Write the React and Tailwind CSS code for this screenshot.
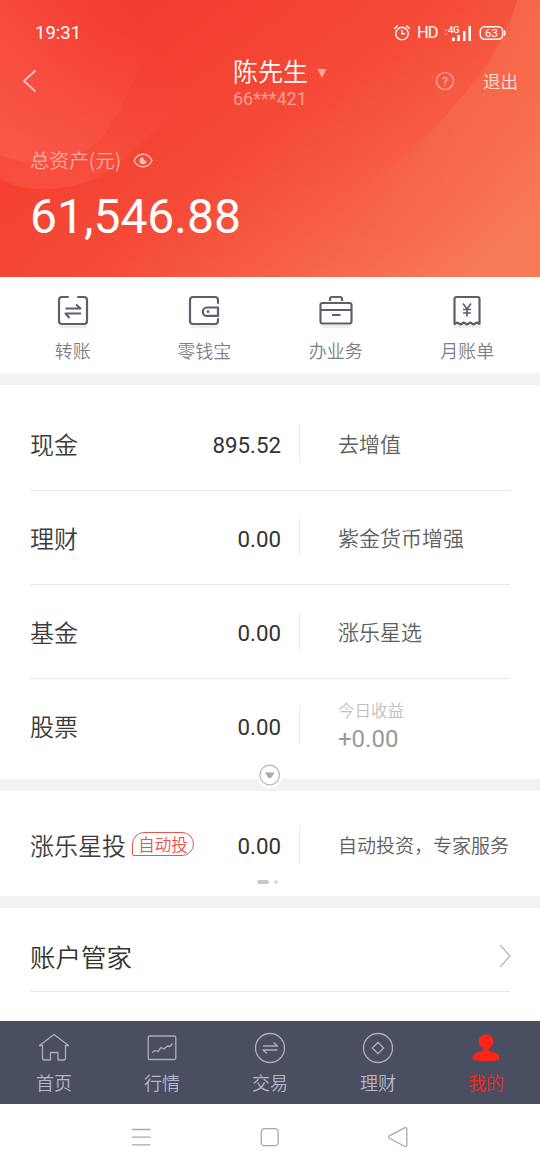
import React from "react";

const CJK = "font-['Noto_Sans_CJK_SC',sans-serif] font-[350]";
const NUM = "font-['Roboto',sans-serif] font-normal";

function HeaderArt() {
  return (
    <svg className="absolute inset-0" width="540" height="277" viewBox="0 0 540 277" fill="none">
      <defs>
        <linearGradient id="base" x1="150" y1="0" x2="400" y2="330" gradientUnits="userSpaceOnUse">
          <stop offset="0" stopColor="#f43b2f" />
          <stop offset="0.45" stopColor="#f54b38" />
          <stop offset="1" stopColor="#f87a56" />
        </linearGradient>
        <linearGradient id="waveA" x1="165" y1="40" x2="30" y2="150" gradientUnits="userSpaceOnUse">
          <stop offset="0" stopColor="#ff7060" stopOpacity="0" />
          <stop offset="1" stopColor="#ff7565" stopOpacity="0.28" />
        </linearGradient>
        <linearGradient id="waveB" x1="170" y1="70" x2="60" y2="190" gradientUnits="userSpaceOnUse">
          <stop offset="0" stopColor="#ff6a58" stopOpacity="0" />
          <stop offset="1" stopColor="#ff7060" stopOpacity="0.28" />
        </linearGradient>
        <linearGradient id="disc" x1="530" y1="20" x2="370" y2="220" gradientUnits="userSpaceOnUse">
          <stop offset="0" stopColor="#fa8058" stopOpacity="0.4" />
          <stop offset="0.5" stopColor="#fa8058" stopOpacity="0.2" />
          <stop offset="1" stopColor="#fa7a54" stopOpacity="0" />
        </linearGradient>
      </defs>
      <rect width="540" height="277" fill="url(#base)" />
      <path d="M517 0C510 28 488 69 459 100C420 147 370 190 300 215L200 277H540V0Z" fill="url(#disc)" />
      <path d="M0 0H280V90C230 96 200 105 172 119C155 128 138 146 117 165C98 181 70 189 41 189C25 189 12 185 0 179Z" fill="url(#waveB)" />
      <path d="M0 0H230V36C190 40 165 46 152 55C131 76 128 98 114 120C98 149 75 162 34 162C22 162 10 159 0 155Z" fill="url(#waveA)" />
    </svg>
  );
}

function StatusBar() {
  return (
    <div className="flex h-[50px] items-center justify-between pt-4 pr-[34px] pl-[35px] text-white">
      <span className={`${NUM} text-[18.5px] leading-none`}>19:31</span>
      <div className="flex items-center">
        <svg width="18" height="18" viewBox="0 0 18 18" fill="none" stroke="#fff" strokeWidth="1.4" strokeLinecap="round">
          <circle cx="9" cy="9.6" r="6.3" />
          <path d="M9 6.2v3.6h2.6M1.6 4.4L4.400 2M16.400 4.400L13.600 2" />
        </svg>
        <span className={`${NUM} ml-[6px] w-[21px] text-[16.5px] leading-none tracking-[-1px]`}>HD</span>
        <svg className="ml-[6px]" width="28" height="18" viewBox="0 0 28 18">
          <path d="M0 7l2-2.500L4 7zM0 9l2 2.500L4 9z" fill="#fff" opacity="0.3" />
          <text x="4" y="9" fontSize="9.500" fontWeight="500" fontFamily="Roboto, sans-serif" letterSpacing="-0.5" fill="#fff">4G</text>
          <path d="M8 13.500h2.700v3.500H8zM13.300 11h2.700v6h-2.700zM19 7h2.500v10h-2.500zM24.500 2h2.500v15h-2.500z" fill="#fff" />
        </svg>
        <svg className="ml-[7px]" width="27" height="16" viewBox="0 0 27 16" fill="none">
          <rect x="1.200" y="1.800" width="22.500" height="12.400" rx="4.500" stroke="#fff" strokeWidth="1.500" />
          <path d="M25 5.500c1.300 1 1.300 4 0 5" stroke="#fff" strokeWidth="1.400" />
          <text x="12.500" y="12" textAnchor="middle" fontSize="11.500" fontFamily="Roboto, sans-serif" fill="#fff">63</text>
        </svg>
      </div>
    </div>
  );
}

function Header() {
  return (
    <header className="relative h-[277px] shrink-0 overflow-hidden">
      <HeaderArt />
      <div className="relative">
        <StatusBar />
        <div className="grid h-[62px] grid-cols-[233px_1fr_auto] items-center pr-[22px] text-white">
          <svg className="ml-[22px]" width="16" height="24" viewBox="0 0 16 24" fill="none" stroke="#ffc9c1" strokeWidth="1.800">
            <path d="M13.500 1.500L2 12l11.500 10.500" />
          </svg>
          <div className="flex flex-col">
            <div className="flex items-center">
              <span className={`${CJK} text-[25px] leading-[36px]`}>陈先生</span>
              <svg className="mt-[7px] ml-[9px]" width="10" height="11" viewBox="0 0 10 11">
                <path d="M0.500 1H9.500L5 10z" fill="#fca79c" />
              </svg>
            </div>
            <span className={`${NUM} text-[18px] leading-[22px] text-[#fb9d91]`}>66***421</span>
          </div>
          <div className="flex items-center">
            <svg width="20" height="20" viewBox="0 0 20 20" fill="none">
              <circle cx="10" cy="10" r="8.500" stroke="#fcb1a5" strokeWidth="1.200" />
              <text x="10" y="14.500" textAnchor="middle" fontSize="12.500" fontFamily="Roboto, sans-serif" fill="#fcb1a5">?</text>
            </svg>
            <span className={`${CJK} ml-[28px] text-[17.5px] leading-6 text-[#ffe3dc]`}>退出</span>
          </div>
        </div>
        <div className="mt-[34px] flex h-[28px] items-center pl-[30px]">
          <span className={`${CJK} text-[19.6px] leading-7 text-[#fdaea3]`}>总资产(元)</span>
          <svg className="ml-[12px]" width="20" height="15" viewBox="0 0 20 15" fill="none">
            <path d="M1 7.500C3 3.500 6.500 1.200 10 1.200S17 3.500 19 7.500C17 11.500 13.500 13.800 10 13.800S3 11.500 1 7.500Z" stroke="#fec2b8" strokeWidth="1.400" />
            <path d="M10 4.200A3.500 3.500 0 1 0 13.500 7.700C11.500 8 10 6.500 10 4.200Z" fill="#fec2b8" />
          </svg>
        </div>
        <div className={`${NUM} mt-[14px] pl-[30px] text-[48px] leading-[58px] text-white`}>61,546.88</div>
      </div>
    </header>
  );
}

const actionStroke = { fill: "none", stroke: "#5c606e", strokeWidth: 2.2, strokeLinejoin: "round", strokeLinecap: "round" };

function ActionIcon({ children }) {
  return (
    <svg width="36" height="36" viewBox="0 0 36 36" {...actionStroke}>
      <path d="M6 33.500H31" stroke="#fbe4e4" strokeWidth="2.500" />
      {children}
    </svg>
  );
}

const actions = [
  {
    label: "转账",
    icon: (
      <>
        <path d="M13 4H7a3 3 0 0 0-3 3v21a3 3 0 0 0 3 3h22a3 3 0 0 0 3-3V7a3 3 0 0 0-3-3h-6" />
        <path d="M10.500 15.500H25.500L21 11.500M26 20.500H10.500L14.500 25" strokeWidth="2" strokeLinecap="butt" />
      </>
    ),
  },
  {
    label: "零钱宝",
    icon: (
      <>
        <path d="M32 10V7a3 3 0 0 0-3-3H7a3 3 0 0 0-3 3v21a3 3 0 0 0 3 3h22a3 3 0 0 0 3-3v-2" />
        <path d="M32 14.500H21a4.200 4.200 0 0 0 0 8.400H32Z" />
        <circle cx="22" cy="18.700" r="1.400" fill="#5c606e" stroke="none" />
      </>
    ),
  },
  {
    label: "办业务",
    icon: (
      <>
        <rect x="2.500" y="10" width="31" height="20.500" rx="2" />
        <path d="M12 8V6a2 2 0 0 1 2-2h8a2 2 0 0 1 2 2V8M2.500 17H33.500M14 22H22.500" strokeLinecap="butt" />
      </>
    ),
  },
  {
    label: "月账单",
    icon: (
      <>
        <path d="M5.500 31V6a2 2 0 0 1 2-2h21a2 2 0 0 1 2 2V31l-2.500-1.500-3.500 2-3.200-2-3.300 2-3.300-2-3.200 2-3.500-2Z" />
        <path d="M14 10.500l4 5.500L22 10.500M18 16V23.500M14 16.500H22M14 20H22" strokeWidth="1.700" strokeLinecap="butt" />
      </>
    ),
  },
];

function QuickActions() {
  return (
    <nav className="flex h-24 shrink-0 px-[7px] pt-[16px]">
      {actions.map((a) => (
        <div key={a.label} className="flex flex-1 flex-col items-center">
          <ActionIcon>{a.icon}</ActionIcon>
          <span className={`${CJK} mt-[7px] text-[18px] leading-7 text-[#7d7f88]`}>{a.label}</span>
        </div>
      ))}
    </nav>
  );
}

function Gap() {
  return <div className="h-3 shrink-0 bg-[#f2f2f2]" />;
}

function AssetRow({ label, tag, value, last, children }) {
  return (
    <div className={`mx-[30px] flex h-[94px] items-center border-b ${last ? "border-transparent" : "border-[#e8e8e8]"}`}>
      <div className="flex w-[182px] items-center">
        <span className={`${CJK} text-[24px] leading-9 whitespace-nowrap text-[#3c3c3c]`}>{label}</span>
        {tag}
      </div>
      <span className={`${NUM} w-[69px] pt-[2px] text-right text-[22.3px] leading-8 text-[#333]`}>{value}</span>
      <div className="ml-[18px] h-[39px] w-px bg-[#ececec]" />
      <div className={`${CJK} ml-[38px] whitespace-nowrap text-[#606060]`}>{children}</div>
    </div>
  );
}

function Holdings() {
  return (
    <section className="h-[394px] shrink-0 pt-3">
      <AssetRow label="现金" value="895.52"><div className="pb-[2px] text-[21px] leading-8">去增值</div></AssetRow>
      <AssetRow label="理财" value="0.00"><div className="pb-[2px] text-[21px] leading-8">紫金货币增强</div></AssetRow>
      <AssetRow label="基金" value="0.00"><div className="pb-[2px] text-[21px] leading-8">涨乐星选</div></AssetRow>
      <AssetRow label="股票" value="0.00" last>
        <div className="pt-[2px] text-[16.5px] leading-6 text-[#c0c0c0]">今日收益</div>
        <div className={`${NUM} pt-px text-[24px] leading-8 text-[#999]`}>+0.00</div>
      </AssetRow>
    </section>
  );
}

function ExpandDivider() {
  return (
    <div className="relative h-3 shrink-0 bg-[#f2f2f2]">
      <svg className="absolute -top-[18px] left-[255px]" width="30" height="30" viewBox="0 0 30 30">
        <circle cx="14.700" cy="14" r="13" fill="#fff" />
        <circle cx="14.700" cy="14" r="9.800" fill="#fff" stroke="#b5b5b5" strokeWidth="1.200" />
        <path d="M10 11.500H19.500L16.500 16.300Q14.700 18.300 13 16.300Z" fill="#aaa" />
      </svg>
    </div>
  );
}

function AutoInvest() {
  const tag = (
    <span className="-mt-px ml-[6px] flex h-[24px] w-[62px] shrink-0 items-center justify-center rounded-[12px] rounded-bl-[2px] border border-[#e8554e] text-[16.5px] leading-none whitespace-nowrap text-[#ee4f46]">
      <span className={CJK}>自动投</span>
    </span>
  );
  return (
    <section className="h-[105px] shrink-0 pt-[7px]">
      <AssetRow label="涨乐星投" value="0.00" tag={tag} last>
        <div className="text-[19px] leading-8">自动投资，专家服务</div>
      </AssetRow>
      <div className="-mt-[12px] flex items-center justify-center gap-[5px] pr-[5px]">
        <span className="h-[4px] w-[12px] rounded-full bg-[#c8c8c8]" />
        <span className="size-[4px] rounded-full bg-[#dedede]" />
      </div>
    </section>
  );
}

function AccountManager() {
  return (
    <section className="h-[113px] shrink-0 px-[30px]">
      <div className="flex h-[84px] items-center justify-between border-b border-[#e8e8e8] pt-[13px]">
        <span className={`${CJK} text-[25.5px] leading-9 text-[#333]`}>账户管家</span>
        <svg className="-mr-px" width="12" height="24" viewBox="0 0 12 24" fill="none" stroke="#b8b8b8" strokeWidth="1.300">
          <path d="M1 1L11 12L1 23" />
        </svg>
      </div>
    </section>
  );
}

const tabs = [
  {
    label: "首页",
    icon: <path d="M1.500 13.500L16 2.500L30.500 13.500H27.500V26a2 2 0 0 1-2 2H20V20.500H12.500V28H6.500a2 2 0 0 1-2-2V13.500Z" />,
  },
  {
    label: "行情",
    icon: (
      <>
        <rect x="2.200" y="4" width="27.600" height="23.500" rx="1.500" />
        <path d="M6 20.500L9 18.500L12 19.500L15 15.500L18 17L21.500 14L24 14.500L26.500 11.500" />
      </>
    ),
  },
  {
    label: "交易",
    icon: (
      <>
        <circle cx="16" cy="16" r="14.500" />
        <path d="M9 14H23.500L19.500 10.500M23.500 18H9L13 21.500" />
      </>
    ),
  },
  {
    label: "理财",
    icon: (
      <>
        <circle cx="16" cy="16" r="14.500" />
        <path d="M16 10.300L21.700 16L16 21.700L10.300 16Z" />
      </>
    ),
  },
  {
    label: "我的",
    active: true,
    icon: (
      <path
        d="M16 2.500C11.500 2.500 8.700 5.500 8.700 9.500C8.700 12.500 10.500 15 13.300 16.300C13.700 18 13 19 11 19.500C5.500 20.500 2.500 23 2.500 26C2.500 28.300 6 29 16 29S29.500 28.300 29.500 26C29.500 23 26.500 20.500 21 19.500C19 19 18.300 18 18.700 16.300C21.500 15 23.300 12.500 23.300 9.500C23.300 5.500 20.500 2.500 16 2.500Z"
        fill="#ff2418"
        stroke="none"
      />
    ),
  },
];

function TabBar() {
  return (
    <nav className="flex h-[83px] shrink-0 bg-[#4a4e61]">
      {tabs.map((t) => (
        <div key={t.label} className="flex flex-1 flex-col items-center pt-[11px]">
          <svg width="32" height="32" viewBox="0 0 32 32" fill="none" stroke="#a9adbf" strokeWidth="1.300" strokeLinejoin="round">
            {t.icon}
          </svg>
          <span className={`${CJK} mt-[4px] text-[18px] leading-7 ${t.active ? "text-[#ff2418]" : "text-[#b4b7c8]"}`}>{t.label}</span>
        </div>
      ))}
    </nav>
  );
}

function SystemNav() {
  return (
    <footer className="flex h-[66px] shrink-0 items-center justify-between px-[131px]">
      <svg width="20" height="20" viewBox="0 0 20 20" stroke="#a8a8a8" strokeWidth="1.300">
        <path d="M1 2.500H19.500M1 10.200H19.500M1 17.800H19.500" />
      </svg>
      <svg width="20" height="20" viewBox="0 0 20 20" fill="none" stroke="#a8a8a8" strokeWidth="1.300">
        <rect x="2.200" y="1.700" width="17" height="17" rx="3.500" />
      </svg>
      <svg width="22" height="22" viewBox="0 0 22 22" fill="none" stroke="#a8a8a8" strokeWidth="1.300" strokeLinejoin="round">
        <path d="M18 1.700L2.300 9.800Q0.800 11 2.300 12.200L18 20.500Q19.800 21 19.800 19V3.200Q19.800 1.200 18 1.700Z" />
      </svg>
    </footer>
  );
}

export default function App() {
  return (
    <main className="flex h-[1170px] w-[540px] flex-col overflow-hidden bg-white">
      <Header />
      <QuickActions />
      <Gap />
      <Holdings />
      <ExpandDivider />
      <AutoInvest />
      <Gap />
      <AccountManager />
      <TabBar />
      <SystemNav />
    </main>
  );
}
